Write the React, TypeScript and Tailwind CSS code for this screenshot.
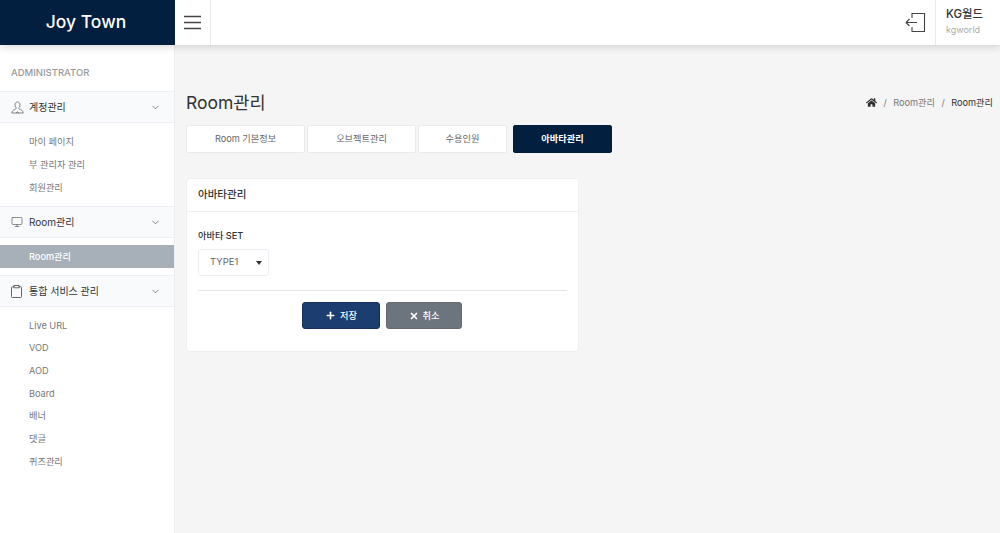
import React from 'react';
import { ChevronDown, Monitor, Plus, X } from 'lucide-react';
import { FaHome } from 'react-icons/fa';

const font = "font-['Inter','Noto_Sans_CJK_KR',sans-serif]";

function MenuHead({ icon, label }: { icon: React.ReactNode; label: string }) {
  return (
    <div className="flex h-[32px] items-center border-y border-[#eeeff5] bg-[#f9fafb] pl-[11px] pr-[13px] text-[10px] text-[#333]">
      <span className="flex w-[18px] justify-start">{icon}</span>
      <span className="flex-1">{label}</span>
      <ChevronDown size={11} strokeWidth={1.5} className="text-[#555]" />
    </div>
  );
}

function SubItem({ label, tight }: { label: string; tight?: boolean }) {
  return (
    <div className={`flex items-center pl-[29px] text-[9.2px] text-[#777] ${tight ? 'h-[22.7px]' : 'h-[23px]'}`}>
      {label}
    </div>
  );
}

function Tab({ label, width, active }: { label: string; width: string; active?: boolean }) {
  return (
    <div
      className={`${width} flex h-[28px] items-center justify-center rounded-[2px] border text-[9.2px] ${
        active ? 'border-[#031f3f] bg-[#031f3f] font-bold text-white' : 'border-[#e9eaef] bg-white text-[#666]'
      }`}
    >
      {label}
    </div>
  );
}

export default function App() {
  return (
    <div className={`${font} flex h-[533px] w-[1000px] flex-col overflow-hidden bg-[#f5f5f5]`}>
      {/* top bar */}
      <header className="relative z-10 flex h-[45px] shrink-0 items-stretch bg-white shadow-[0_2px_8px_rgba(0,0,0,0.15)]">
        <div className="flex w-[175px] items-center justify-center bg-[#031f3f] pr-[3px] text-[17.5px] font-medium text-white">
          Joy Town
        </div>
        <div className="flex w-[36px] items-center justify-center border-r border-[#e9eaef] pr-[1px]">
          <svg width="17" height="15" viewBox="0 0 17 15" fill="none" stroke="#444" strokeWidth="1.3">
            <path d="M0 1.5h17M0 7.5h17M0 13.5h17" />
          </svg>
        </div>
        <div className="flex-1" />
        <div className="flex w-[35px] items-center pl-[5px]">
          <svg width="21" height="21" viewBox="0 0 21 21" fill="none" stroke="#444" strokeWidth="1.1">
            <path d="M7 6V1.500h12.500v18H7V15M1 10.500h11M1 10.500l3.500-3.500M1 10.500l3.500 3.500" />
          </svg>
        </div>
        <div className="w-[65px] border-l border-[#e9eaef] pl-[10px] pt-[5px]">
          <div className="text-[11.4px] font-medium leading-[18px] text-[#333]">KG월드</div>
          <div className="text-[9px] leading-[14px] text-[#aaa]">kgworld</div>
        </div>
      </header>

      <div className="flex min-h-0 flex-1">
        {/* sidebar */}
        <aside className="w-[175px] shrink-0 border-r border-[#eeeff5] bg-white pt-[21px]">
          <div className="mb-[12px] pl-[11px] text-[9.5px] font-medium leading-[13px] text-[#999]">ADMINISTRATOR</div>
          <MenuHead
            label="계정관리"
            icon={
              <svg width="13" height="13" viewBox="0 0 13 13" fill="none" stroke="#666" strokeWidth="0.8">
                <path d="M6.500 1C4.900 1 4 2.200 4 3.800c0 1.300.5 2.400 1.100 3 .3.900-.3 1.300-1.300 1.700C2.300 9.100 1 9.800.8 12h11.400c-.2-2.200-1.500-2.900-3-3.500-1-.4-1.600-.8-1.300-1.700.6-.6 1.100-1.700 1.100-3C9 2.200 8.100 1 6.500 1zM5.300 12c0-.7.500-1.100 1.200-1.100s1.200.4 1.200 1.100" />
              </svg>
            }
          />
          <div className="py-[7px]">
            <SubItem label="마이 페이지" />
            <SubItem label="부 관리자 관리" />
            <SubItem label="회원관리" />
          </div>
          <MenuHead label="Room관리" icon={<Monitor size={12} strokeWidth={1.3} className="text-[#555]" />} />
          <div className="py-[7px]">
            <div className="flex h-[23px] items-center bg-[#a7afb9] pl-[29px] text-[9.2px] font-medium text-white">Room관리</div>
          </div>
          <MenuHead
            label="통합 서비스 관리"
            icon={
              <svg width="11" height="13" viewBox="0 0 11 13" fill="none" stroke="#555" strokeWidth="0.9">
                <path d="M3 1.800H1.500a1 1 0 0 0-1 1v8.700a1 1 0 0 0 1 1h8a1 1 0 0 0 1-1V2.800a1 1 0 0 0-1-1H8" />
                <rect x="3" y="0.500" width="5" height="2.300" fill="#fff" />
              </svg>
            }
          />
          <div className="pt-[7.3px]">
            <SubItem tight label="Live URL" />
            <SubItem tight label="VOD" />
            <SubItem tight label="AOD" />
            <SubItem tight label="Board" />
            <SubItem tight label="배너" />
            <SubItem tight label="댓글" />
            <SubItem tight label="퀴즈관리" />
          </div>
        </aside>

        {/* content */}
        <main className="flex-1 pl-[11px] pr-[7px] pt-[43px]">
          <div className="flex h-[29px] items-center justify-between">
            <h1 className="text-[17.5px] leading-none text-[#333]">Room관리</h1>
            <div className="flex items-center gap-[6.5px] text-[9.2px] text-[#777]">
              <FaHome size={11} className="text-[#333]" />
              <span>/</span>
              <span>Room관리</span>
              <span>/</span>
              <span className="text-[#333]">Room관리</span>
            </div>
          </div>
          <div className="mt-[8px] flex">
            <Tab label="Room 기본정보" width="w-[119px]" />
            <Tab label="오브젝트관리" width="ml-[2px] w-[109px]" />
            <Tab label="수용인원" width="ml-[2px] w-[89px]" />
            <Tab label="아바타관리" width="ml-[6px] w-[99px]" active />
          </div>

          <section className="mt-[25px] h-[174px] w-[393px] rounded-[4px] border border-[#eeeff5] bg-white">
            <div className="flex h-[33px] items-center border-b border-[#eeeff5] pl-[11px] text-[10.5px] font-medium text-[#333]">
              아바타관리
            </div>
            <div className="px-[11px] pt-[17px]">
              <div className="text-[9.2px] font-medium leading-[14px] text-[#333]">아바타 SET</div>
              <div className="mt-[6px] flex h-[27px] w-[71px] items-center justify-between rounded-[3px] border border-[#eeeff5] pl-[11px] pr-[6px] text-[9.5px] text-[#666]">
                <span>TYPE1</span>
                <span className="h-0 w-0 border-x-[3px] border-t-[4px] border-x-transparent border-t-[#333]" />
              </div>
              <div className="mt-[14px] border-t border-[#e4e5ea]" />
              <div className="mr-[1px] mt-[11px] flex justify-center gap-[6px]">
                <div className="flex h-[27px] w-[78px] items-center justify-center gap-[4px] rounded-[3px] border border-[#152f59] bg-[#1c3d70] text-[9.2px] font-medium text-white">
                  <Plus size={11} strokeWidth={3.5} />
                  저장
                </div>
                <div className="flex h-[27px] w-[76px] items-center justify-center gap-[4px] rounded-[3px] border border-[#63696f] bg-[#6c757d] text-[9.2px] font-medium text-white">
                  <X size={10} strokeWidth={4} />
                  취소
                </div>
              </div>
            </div>
          </section>
        </main>
      </div>
    </div>
  );
}
